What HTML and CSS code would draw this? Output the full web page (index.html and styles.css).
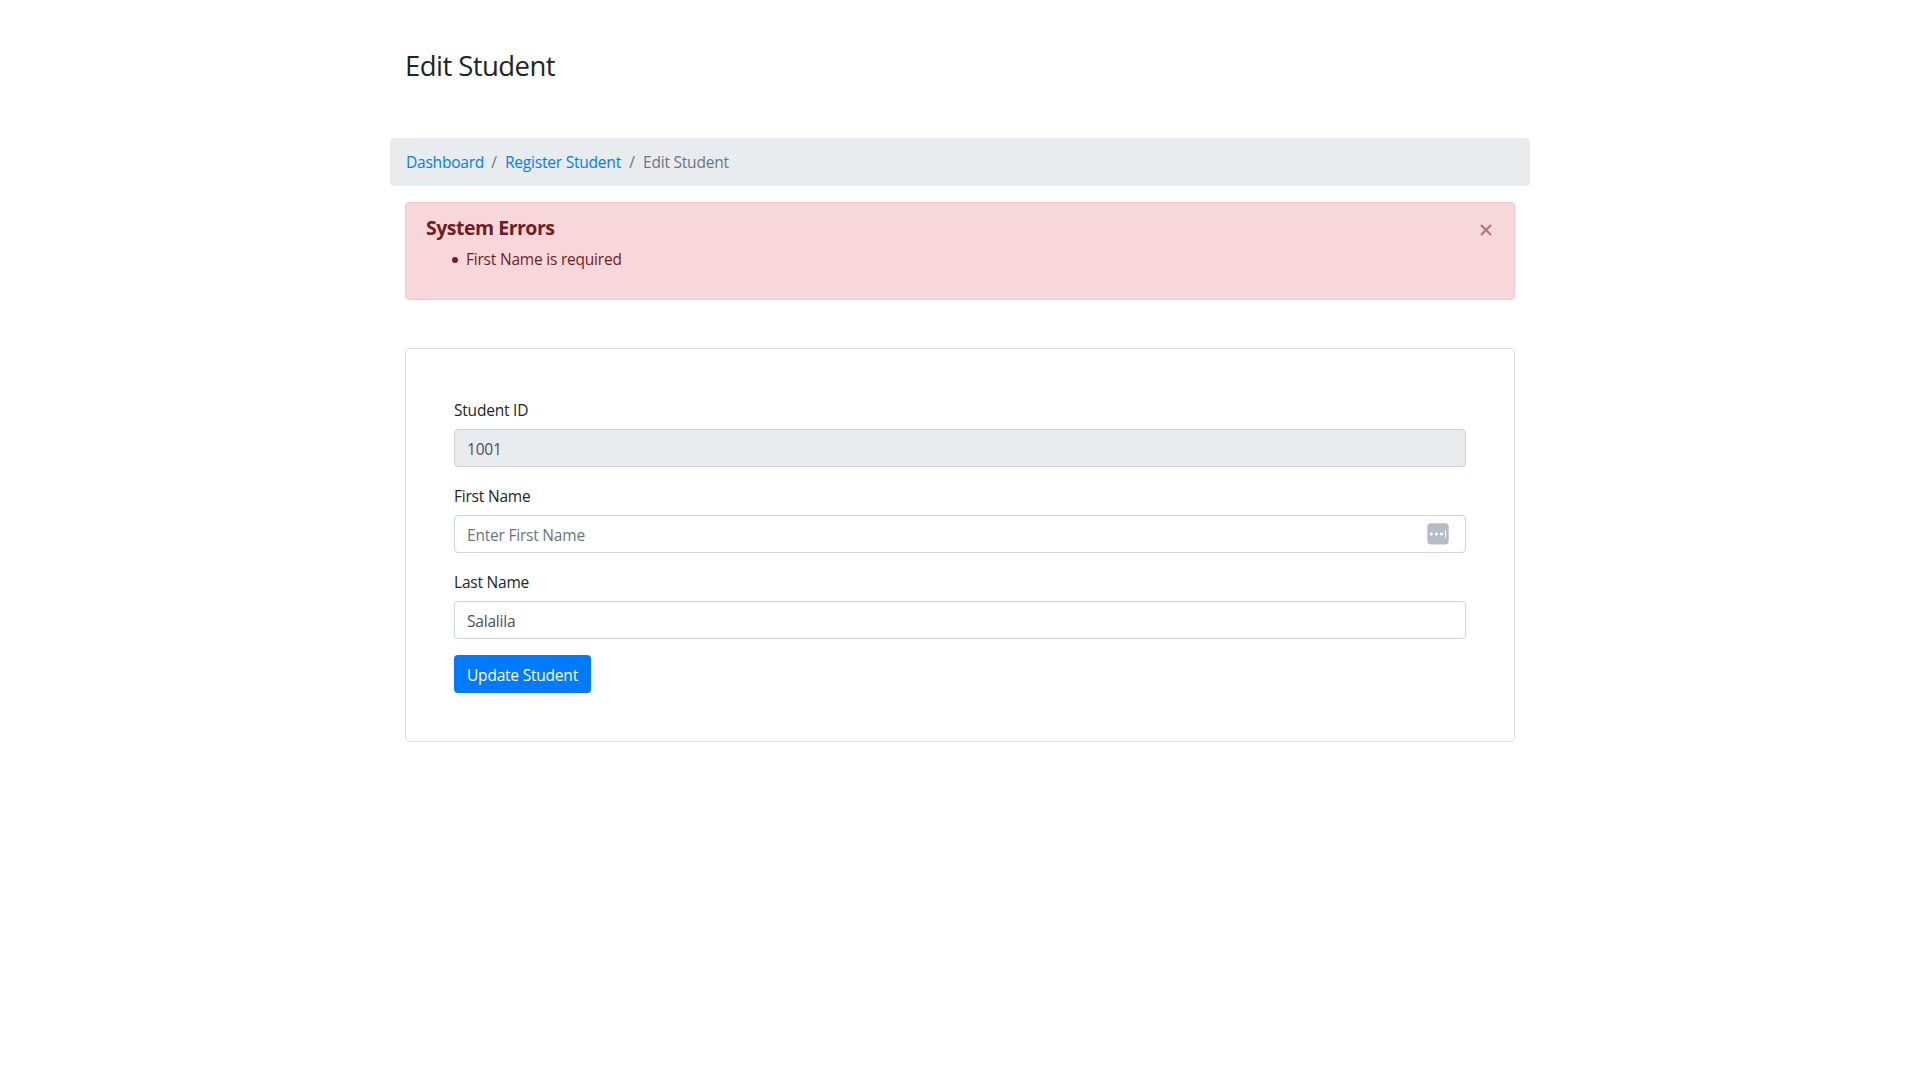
FILE: index.html
```html
<!DOCTYPE html>
<html lang="en">
<head>
<meta charset="utf-8">
<title>Edit Student</title>
<link rel="stylesheet" href="styles.css">
</head>
<body>
<main class="container">
  <h3 class="title">Edit Student</h3>
  <nav class="breadcrumb">
    <a href="#" class="crumb-home">Dashboard</a><span class="sep">/</span><a href="#" class="crumb-register">Register Student</a><span class="sep">/</span><span class="crumb-current">Edit Student</span>
  </nav>
  <section class="alert">
    <div class="alert-body">
      <h5>System Errors</h5>
      <ul><li>First Name is required</li></ul>
    </div>
    <button class="close" type="button" aria-label="Close"><svg viewBox="0 0 12 12"><path d="M1 1 11 11M11 1 1 11"/></svg></button>
  </section>
  <form class="card">
    <div class="group">
      <label for="sid">Student ID</label>
      <input id="sid" class="control" value="1001" readonly>
    </div>
    <div class="group">
      <label for="first">First Name</label>
      <div class="field">
        <input id="first" class="control" placeholder="Enter First Name">
        <svg class="fill-icon" viewBox="0 0 22 22"><rect x=".3" y=".3" width="21.4" height="21.2" rx="3.5" fill="#b5bcc6"/><g fill="#fff"><circle cx="4.3" cy="11" r="1.6"/><circle cx="9.4" cy="11" r="1.6"/><circle cx="14.4" cy="11" r="1.6"/><rect x="18" y="7" width="1" height="8"/></g></svg>
      </div>
    </div>
    <div class="group">
      <label for="last">Last Name</label>
      <input id="last" class="control" value="Salalila">
    </div>
    <button class="submit" type="button">Update Student</button>
  </form>
</main>
</body>
</html>
```
FILE: styles.css
```css
* { box-sizing: border-box; }
body { margin: 0; background: #fff; color: #212529; font: 15.5px/24px "Open Sans", "Noto Sans", sans-serif; letter-spacing: -0.21px; }
.container { width: 1140px; margin: 0 auto; padding: 49px 15px 0; }
.title { margin: 0 0 55px; font-size: 27.5px; line-height: 34px; font-weight: 400; letter-spacing: -0.55px; }
.breadcrumb { display: flex; margin: 0 -15px 16px; padding: 12px 16px; background: #e9ecef; border-radius: 4px; color: #6c757d; white-space: nowrap; }
.breadcrumb a { color: #007bff; text-decoration: none; }
.crumb-home { width: 77px; }
.crumb-register { width: 116px; }
.sep { width: 22px; text-align: center; }
.alert { display: flex; justify-content: space-between; align-items: flex-start; height: 98px; margin-bottom: 48px; padding: 13px 20px; background: #f8d7da; border: 1px solid #f5c6cb; border-radius: 4px; color: #721c24; }
.alert h5 { margin: 0 0 7px; font-size: 19.5px; line-height: 24px; font-weight: 700; letter-spacing: -0.5px; }
.alert ul { margin: 0; padding: 0 0 0 26px; list-style: none; }
.alert li { display: flex; align-items: center; gap: 8px; }
.alert li::before { content: ""; width: 6px; height: 6px; margin-top: 2px; border-radius: 50%; background: #721c24; }
.close { width: 14px; height: 12px; margin: 8px 1px 0 0; padding: 0 1px; border: 0; background: none; }
.close svg { display: block; width: 12px; height: 12px; fill: none; stroke: #b5797f; stroke-width: 2.4; }
.card { padding: 48px; border: 1px solid #dfdfdf; border-radius: 4px; }
.group { margin-bottom: 16px; }
label { display: block; height: 24px; margin-bottom: 8px; padding-top: 1px; }
.field { position: relative; }
.control { display: block; width: 100%; height: 38px; padding: 7px 12px 5px; border: 1px solid #ced4da; border-radius: 4px; background: #fff; color: #495057; font: inherit; letter-spacing: inherit; outline: 0; }
.control::placeholder { color: #6c757d; opacity: 1; }
.control[readonly] { background: #e9ecef; }
.fill-icon { position: absolute; top: 8px; right: 17px; width: 22px; height: 22px; }
.submit { display: block; width: 137px; height: 38px; padding: 2px 0 0; border: 0; border-radius: 4px; background: #007bff; color: #fff; font: inherit; letter-spacing: inherit; }
```
